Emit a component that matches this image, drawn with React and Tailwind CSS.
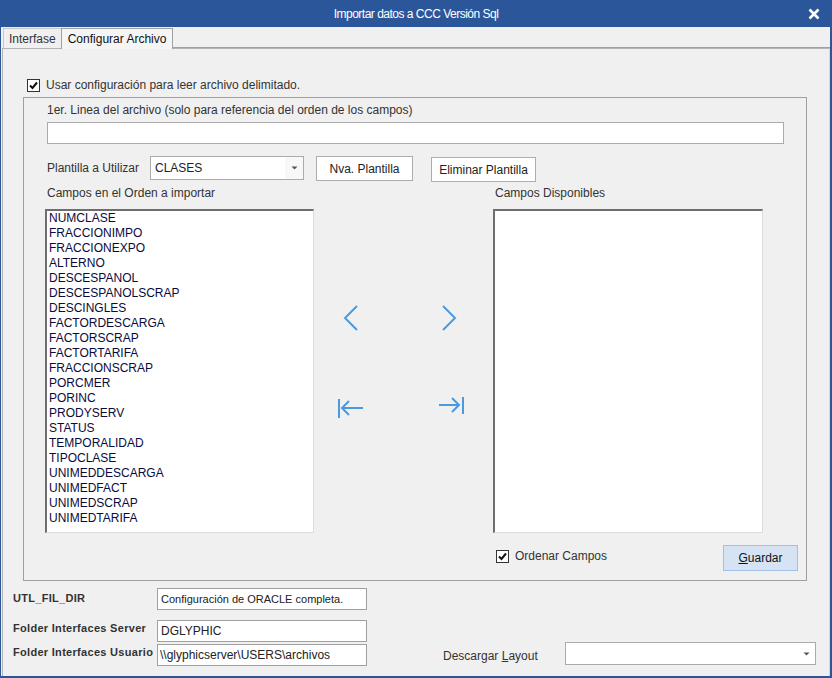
import React from 'react';

const campos = [
    'NUMCLASE', 'FRACCIONIMPO', 'FRACCIONEXPO', 'ALTERNO', 'DESCESPANOL', 'DESCESPANOLSCRAP',
    'DESCINGLES', 'FACTORDESCARGA', 'FACTORSCRAP', 'FACTORTARIFA', 'FRACCIONSCRAP', 'PORCMER',
    'PORINC', 'PRODYSERV', 'STATUS', 'TEMPORALIDAD', 'TIPOCLASE', 'UNIMEDDESCARGA', 'UNIMEDFACT',
    'UNIMEDSCRAP', 'UNIMEDTARIFA',
];

const Check = () => (
    <div className="w-[13px] h-[13px] border border-[#333] bg-white flex items-center justify-center shrink-0">
        <svg width="11" height="11" viewBox="0 0 11 11">
            <path d="M2 5.5 L4.5 8 L9 2.5" fill="none" stroke="#111" strokeWidth="2" />
        </svg>
    </div>
);

const ComboArrow = () => (
    <svg width="7" height="4" viewBox="0 0 7 4">
        <path d="M0.5 0.5 L6.5 0.5 L3.5 3.5 Z" fill="#555" />
    </svg>
);

const Btn = ({ children, className = '' }) => (
    <div className={`h-[25px] shrink-0 bg-white border border-[#adadad] flex items-center justify-center text-[12px] text-[#222] whitespace-nowrap ${className}`}>
        {children}
    </div>
);

const Lista = ({ items = [], className = '' }) => (
    <div className={`h-[324px] shrink-0 bg-white border-t-2 border-l-2 border-t-[#6e6e6e] border-l-[#6e6e6e] border-r border-b border-r-[#dcdcdc] border-b-[#dcdcdc] pl-[2px] ${className}`}>
        {items.map(i => (
            <div key={i} className="h-[15px] leading-[15px] text-[12px] text-[#0a0a3c]">{i}</div>
        ))}
    </div>
);

const Arrow = ({ d, w = 26, h = 26 }) => (
    <svg width={w} height={h} viewBox={`0 0 ${w} ${h}`}>
        <path d={d} fill="none" stroke="#4a9ae0" strokeWidth="2" />
    </svg>
);

export default function App() {
    return (
        <div className="w-[832px] h-[678px] bg-[#2b579a] flex flex-col font-['Liberation_Sans',Arial,sans-serif] overflow-hidden">
            {/* barra de titulo */}
            <div className="h-[27px] shrink-0 relative flex items-center justify-center">
                <span className="text-white text-[12px] tracking-[-0.5px]">Importar datos a CCC Versión Sql</span>
                <svg className="absolute right-[12px] top-[8px]" width="12" height="12" viewBox="0 0 12 12">
                    <path d="M1.5 1.5 L10.5 10.5 M10.5 1.5 L1.5 10.5" stroke="#fff" strokeWidth="2.6" />
                </svg>
            </div>

            <div className="flex-1 ml-[1px] mr-[2px] mb-[2px] bg-[#f0f0f0] flex flex-col">
                {/* tabs */}
                <div className="h-[21px] shrink-0 flex items-end pl-[2px]">
                    <div className="h-[20px] px-[5px] border border-b-0 border-r-0 border-[#c8c8c8] flex items-center text-[12px] text-[#333]">Interfase</div>
                    <div className="h-[21px] px-[6px] border border-b-0 border-[#a0a0a0] bg-[#f5f5f5] flex items-center text-[12px] text-[#111] -mb-[1px] relative z-10">Configurar Archivo</div>
                    <div className="flex-1 border-b border-[#a0a0a0]"></div>
                </div>

                <div className="flex-1 ml-[1px] border-l border-t border-[#b4b4b4] border-r border-r-[#d8d8d8] flex flex-col">
                    {/* check principal */}
                    <div className="mt-[29px] ml-[24px] flex items-center gap-[6px] h-[14px]">
                        <Check />
                        <span className="text-[12px] text-[#333]">Usar configuración para leer archivo delimitado.</span>
                    </div>

                    {/* grupo */}
                    <div className="mt-[5px] ml-[20px] w-[784px] h-[484px] border border-[#a0a0a0] flex flex-col">
                        <div className="mt-[5px] ml-[23px] h-[14px] text-[12px] leading-[14px] text-[#333]">1er. Linea del archivo (solo para referencia del orden de los campos)</div>
                        <div className="mt-[5px] ml-[23px] w-[737px] h-[22px] bg-white border border-[#ababab]"></div>

                        <div className="mt-[12px] ml-[23px] flex items-start">
                            <div className="w-[103px] h-[24px] flex items-center text-[12px] text-[#333]">Plantilla a Utilizar</div>
                            <div className="w-[154px] h-[24px] bg-white border border-[#ababab] flex items-center">
                                <span className="flex-1 pl-[4px] text-[12px] text-[#222]">CLASES</span>
                                <div className="w-[18px] h-full bg-[#f8f8f8] flex items-center justify-center"><ComboArrow /></div>
                            </div>
                            <Btn className="ml-[12px] w-[97px]">Nva. Plantilla</Btn>
                            <Btn className="ml-[18px] w-[105px] mt-[1px]">Eliminar Plantilla</Btn>
                        </div>

                        <div className="mt-[4px] ml-[23px] h-[14px] flex text-[12px] leading-[14px] text-[#333]">
                            <span className="w-[448px]">Campos en el Orden a importar</span>
                            <span>Campos Disponibles</span>
                        </div>

                        <div className="mt-[9px] ml-[21px] flex">
                            <Lista items={campos} className="w-[269px]" />
                            <div className="w-[179px] shrink-0 flex flex-col">
                                <div className="mt-[96px] flex pl-[23px] gap-[74px]">
                                    <Arrow d="M20 1 L8 13 L20 25" />
                                    <Arrow d="M6 1 L18 13 L6 25" />
                                </div>
                                <div className="mt-[66px] flex pl-[24px] gap-[74px]">
                                    <Arrow d="M1 2 L1 21 M25 11 L4 11 M11 4 L4 11 L11 18" />
                                    <Arrow d="M1 8 L21 8 M14 1 L21 8 L14 15 M25 0 L25 17" />
                                </div>
                            </div>
                            <Lista className="w-[270px]" />
                        </div>

                        <div className="mt-[12px] flex items-start">
                            <div className="ml-[472px] mt-[4px] flex items-center gap-[6px] h-[14px] whitespace-nowrap">
                                <Check />
                                <span className="text-[12px] text-[#333]">Ordenar Campos</span>
                            </div>
                            <div className="ml-auto mr-[8px] w-[75px] h-[26px] shrink-0 bg-[#d5e3f5] border border-[#a4c0ea] flex items-center justify-center text-[12px] text-[#111]">
                                <span><span className="underline">G</span>uardar</span>
                            </div>
                        </div>
                    </div>

                    {/* parte inferior */}
                    <div className="mt-[7px] ml-[10px] flex items-start">
                        <div className="w-[144px] pt-[2px] text-[11px] font-bold tracking-[0.3px] text-[#333]">UTL_FIL_DIR</div>
                        <div className="w-[210px] h-[22px] bg-white border border-[#a0a0a0] flex items-center pl-[3px] text-[11px] text-[#222]">Configuración de ORACLE completa.</div>
                    </div>
                    <div className="mt-[10px] ml-[10px] flex items-start">
                        <div className="w-[144px] text-[11px] font-bold tracking-[0.3px] text-[#333]">Folder Interfaces Server</div>
                        <div className="w-[210px] h-[22px] bg-white border border-[#a0a0a0] flex items-center pl-[3px] text-[12px] text-[#222]">DGLYPHIC</div>
                    </div>
                    <div className="mt-[2px] ml-[10px] flex items-start">
                        <div className="w-[144px] text-[11px] font-bold tracking-[0.3px] text-[#333] whitespace-nowrap">Folder Interfaces Usuario</div>
                        <div className="w-[210px] h-[22px] bg-white border border-[#a0a0a0] flex items-center pl-[2px] text-[12px] text-[#222]">\\glyphicserver\USERS\archivos</div>
                        <div className="ml-[76px] -mt-[2px] flex items-center">
                            <span className="w-[122px] pt-[4px] text-[12px] text-[#333]">Descargar <span className="underline">L</span>ayout</span>
                            <div className="w-[251px] h-[23px] bg-white border border-[#ababab] flex items-center justify-end">
                                <div className="w-[18px] h-full flex items-center justify-center"><ComboArrow /></div>
                            </div>
                        </div>
                    </div>
                </div>
            </div>
        </div>
    );
}
